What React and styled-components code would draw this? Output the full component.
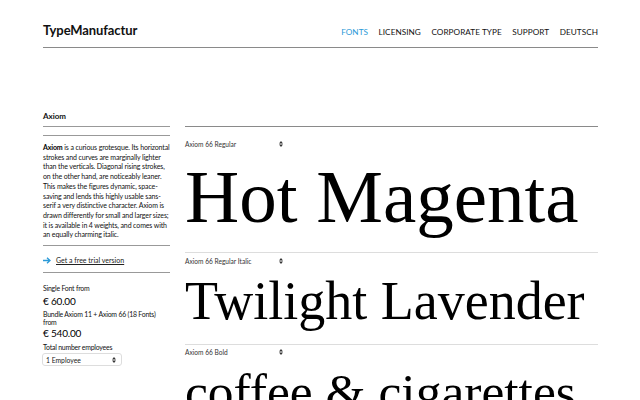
import React from 'react'
import styled, { createGlobalStyle } from 'styled-components'

const GlobalStyle = createGlobalStyle`
  body {
    margin: 0;
    background: #fff;
    color: #111;
    font-family: Lato, "Open Sans", sans-serif;
  }
`

const Page = styled.div`
  padding: 0 42px 0 43px;
  height: 400px;
  overflow: hidden;
`

const Header = styled.header`
  display: flex;
  justify-content: space-between;
  align-items: flex-end;
  height: 48px;
  box-sizing: border-box;
  padding-bottom: 9px;
  border-bottom: 1px solid #8a8a8a;
`

const Logo = styled.div`
  font-size: 13px;
  font-weight: 700;
  line-height: 16px;
  letter-spacing: -0.1px;
`

const Nav = styled.nav`
  display: flex;
  gap: 10.5px;
`

const NavItem = styled.a`
  font-size: 8.2px;
  line-height: 12px;
  letter-spacing: 0.05px;
  text-transform: uppercase;
  color: ${p => (p.active ? '#2b9ad8' : '#111')};
  text-decoration: none;
`

const Main = styled.main`
  display: grid;
  grid-template-columns: 127px 1fr;
  column-gap: 15px;
  padding-top: 63px;
`

const Sidebar = styled.aside`
  display: flex;
  flex-direction: column;
  font-size: 7px;
`

const Title = styled.h2`
  margin: 0;
  font-size: 8px;
  line-height: 10px;
  font-weight: 700;
  padding-bottom: 5px;
  border-bottom: 1px solid #999;
`

const Description = styled.p`
  margin: 8px 0 0;
  padding: 7px 0 5px;
  border-top: 1px solid #999;
  border-bottom: 1px solid #999;
  font-size: 7px;
  line-height: 9.7px;
  letter-spacing: -0.12px;
  white-space: nowrap;
  color: #111;
  b { font-weight: 700; color: #000; }
`

const TrialRow = styled.div`
  display: flex;
  align-items: center;
  gap: 5px;
  padding: 10px 0 8px;
  border-bottom: 1px solid #999;
  line-height: 8px;
`

const TrialLink = styled.a`
  font-size: 7px;
  color: #222;
  text-decoration: underline;
  text-underline-offset: 1px;
`

const Small = styled.div`
  font-size: 6.9px;
  line-height: 8.5px;
  letter-spacing: -0.2px;
  white-space: nowrap;
  color: #111;
  margin-top: ${p => p.gap || 0}px;
`

const Price = styled.div`
  font-size: 10px;
  line-height: 13px;
  letter-spacing: -0.2px;
  color: #000;
  margin-top: ${p => p.gap || 0}px;
`

const Select = styled.div`
  margin-top: 2px;
  width: 80px;
  height: 13px;
  box-sizing: border-box;
  display: flex;
  align-items: center;
  justify-content: space-between;
  padding: 0 5px 0 3px;
  border: 1px solid #ddd;
  border-radius: 3px;
  font-size: 6.8px;
  color: #222;
  margin-left: -1px;
`

const Samples = styled.section`
  padding-top: 15px;
`

const SampleList = styled.div`
  border-top: 1px solid #8a8a8a;
`

const Sample = styled.div`
  border-bottom: 1px solid #ddd;
  padding-top: ${p => p.top}px;
  padding-bottom: ${p => p.bottom}px;
`

const Picker = styled.div`
  display: flex;
  align-items: center;
  justify-content: space-between;
  width: 98px;
  height: 10px;
  font-size: 6.6px;
  color: #333;
`

const Specimen = styled.div`
  font-family: "Liberation Serif", "Times New Roman", serif;
  font-size: ${p => p.size}px;
  line-height: ${p => p.lh}px;
  color: #000;
  white-space: nowrap;
`

const Updown = () => (
  <svg width="4" height="6" viewBox="0 0 4 6">
    <path d="M2 0 L4 2.4 H0 Z M2 6 L4 3.6 H0 Z" fill="#333" />
  </svg>
)

const Arrow = () => (
  <svg width="8" height="7" viewBox="0 0 8 7">
    <path d="M0 3.5 H7 M4 0.7 L7 3.5 L4 6.3" stroke="#2b9ad8" strokeWidth="1.3" fill="none" />
  </svg>
)

const SAMPLES = [
  { style: 'Axiom 66 Regular', text: 'Hot Magenta', size: 75, lh: 95, top: 12, bottom: 8 },
  { style: 'Axiom 66 Regular Italic', text: 'Twilight Lavender', size: 54, lh: 70, top: 3, bottom: 8 },
  { style: 'Axiom 66 Bold', text: 'coffee & cigarettes', size: 51.5, lh: 70, top: 2, bottom: 4 },
]

const NAV = ['Fonts', 'Licensing', 'Corporate Type', 'Support', 'Deutsch']

export default function App() {
  return (
    <Page>
      <GlobalStyle />
      <Header>
        <Logo>TypeManufactur</Logo>
        <Nav>
          {NAV.map((n, i) => (
            <NavItem key={n} active={i === 0}>{n}</NavItem>
          ))}
        </Nav>
      </Header>
      <Main>
        <Sidebar>
          <Title>Axiom</Title>
          <Description>
            <b>Axiom</b> is a curious grotesque. Its horizontal<br />
            strokes and curves are marginally lighter<br />
            than the verticals. Diagonal rising strokes,<br />
            on the other hand, are noticeably leaner.<br />
            This makes the figures dynamic, space-<br />
            saving and lends this highly usable sans-<br />
            serif a very distinctive character. Axiom is<br />
            drawn differently for small and larger sizes;<br />
            it is available in 4 weights, and comes with<br />
            an equally charming italic.
          </Description>
          <TrialRow>
            <Arrow />
            <TrialLink>Get a free trial version</TrialLink>
          </TrialRow>
          <Small gap={11}>Single Font from</Small>
          <Price gap={2}>€ 60.00</Price>
          <Small gap={2}>Bundle Axiom 11 + Axiom 66 (18 Fonts)<br />from</Small>
          <Price gap={0}>€ 540.00</Price>
          <Small gap={3}>Total number employees</Small>
          <Select>
            <span>1 Employee</span>
            <Updown />
          </Select>
        </Sidebar>
        <Samples>
          <SampleList>
            {SAMPLES.map(s => (
              <Sample key={s.style} top={s.top} bottom={s.bottom}>
                <Picker>
                  <span>{s.style}</span>
                  <Updown />
                </Picker>
                <Specimen size={s.size} lh={s.lh}>{s.text}</Specimen>
              </Sample>
            ))}
          </SampleList>
        </Samples>
      </Main>
    </Page>
  )
}
